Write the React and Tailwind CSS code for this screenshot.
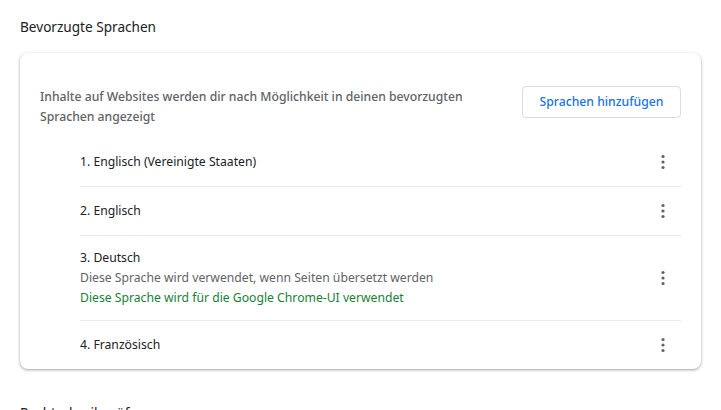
const languages = [
  { name: '1. Englisch (Vereinigte Staaten)' },
  { name: '2. Englisch' },
  {
    name: '3. Deutsch',
    note: 'Diese Sprache wird verwendet, wenn Seiten übersetzt werden',
    uiNote: 'Diese Sprache wird für die Google Chrome-UI verwendet',
  },
  { name: '4. Französisch' },
]

function MoreIcon() {
  return (
    <svg width="20" height="20" viewBox="0 0 20 20" fill="#5f6368" aria-hidden="true">
      <circle cx="10" cy="4.5" r="1.6" />
      <circle cx="10" cy="10" r="1.6" />
      <circle cx="10" cy="15.5" r="1.6" />
    </svg>
  )
}

function LanguageRow({ lang, isLast }) {
  const multi = Boolean(lang.note)
  const height = multi ? 'py-3' : isLast ? 'h-12' : 'h-[49px]'
  return (
    <div className={`flex items-center ${height} ${isLast ? '' : 'border-b border-[#e8eaed]'}`}>
      <div className="flex-1 text-[12.2px] leading-5">
        <div className="text-[#202124]">{lang.name}</div>
        {lang.note && <div className="text-[#5f6368]">{lang.note}</div>}
        {lang.uiNote && <div className="text-[#188038]">{lang.uiNote}</div>}
      </div>
      <button type="button" className="mr-[2px] flex h-8 w-8 items-center justify-center rounded-full">
        <MoreIcon />
      </button>
    </div>
  )
}

export default function App() {
  return (
    <div className="h-[410px] overflow-hidden bg-white px-5 font-['Noto_Sans',sans-serif]">
      <h2 className="pt-[16px] pb-[15px] text-[13.6px] leading-[22px] font-normal text-[#202124]">Bevorzugte Sprachen</h2>

      <section className="rounded-lg bg-white shadow-[0_1px_2px_0_rgba(60,64,67,0.3),0_1px_3px_1px_rgba(60,64,67,0.15)]">
        <div className="flex items-start justify-between pt-8 pr-5 pl-5">
          <p className="mt-[2px] max-w-[440px] text-[12.2px] leading-5 font-medium text-[#5f6368]">
            Inhalte auf Websites werden dir nach Möglichkeit in deinen bevorzugten Sprachen angezeigt
          </p>
          <button
            type="button"
            className="mt-px h-8 w-[159px] rounded border border-[#dadce0] bg-white text-[12.2px] font-medium text-[#1a73e8]"
          >
            Sprachen hinzufügen
          </button>
        </div>

        <div className="mt-[11px] mr-5 ml-[60px]">
          {languages.map((lang, i) => (
            <LanguageRow key={lang.name} lang={lang} isLast={i === languages.length - 1} />
          ))}
        </div>
      </section>

      <h2 className="pt-[33px] text-[13.6px] leading-[22px] text-[#202124]">Rechtschreibprüfung</h2>
    </div>
  )
}
